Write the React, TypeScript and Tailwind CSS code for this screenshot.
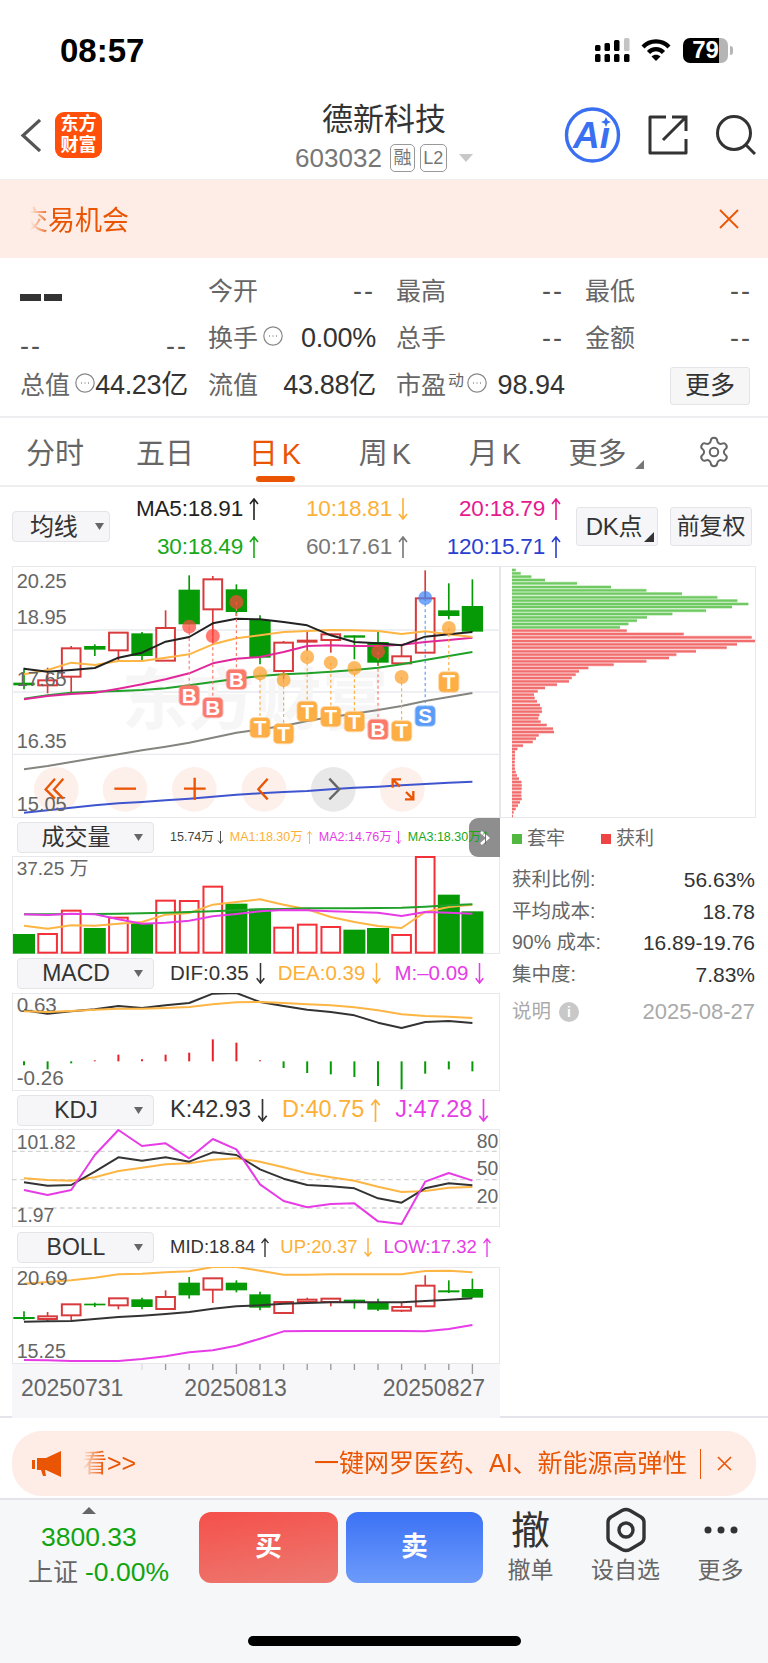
import { Settings } from "lucide-react"

const xs = (i: number) => 72 + 70.8 * i
const pts = (ys: number[]) => ys.map((y, i) => `${xs(i)},${y}`).join(" ")

const RED = "#d93a3c"
const GREEN = "#069a06"

type CandleRow = [number, number, number, number, boolean]

const mainCandles: CandleRow[] = [
  [335, 380, 388, 400, false],
  [335, 373, 388, 412, true],
  [270, 277, 362, 408, true],
  [265, 270, 281, 300, false],
  [230, 230, 283, 315, true],
  [228, 232, 300, 315, false],
  [163, 216, 314, 315, true],
  [58, 101, 205, 205, false],
  [60, 70, 160, 265, true],
  [85, 100, 168, 180, false],
  [178, 192, 305, 325, false],
  [255, 260, 345, 370, true],
  [228, 254, 257, 285, true],
  [232, 235, 252, 290, true],
  [238, 238, 245, 310, false],
  [228, 258, 320, 330, false],
  [265, 301, 322, 325, true],
  [43, 127, 290, 290, true],
  [82, 163, 180, 190, false],
  [70, 150, 227, 228, false],
]

const bollCandles: CandleRow[] = [
  [663, 680, 686, 690, false],
  [665, 678, 686, 695, true],
  [642, 642, 675, 690, true],
  [637, 640, 645, 650, false],
  [624, 624, 645, 657, true],
  [622, 627, 650, 657, false],
  [600, 620, 656, 656, true],
  [560, 577, 615, 625, false],
  [564, 564, 598, 638, true],
  [570, 577, 600, 606, false],
  [604, 612, 652, 660, false],
  [635, 635, 668, 668, true],
  [622, 628, 635, 640, true],
  [625, 625, 635, 648, true],
  [628, 628, 635, 655, false],
  [625, 636, 658, 662, false],
  [636, 650, 661, 665, true],
  [555, 586, 648, 648, true],
  [570, 600, 606, 608, false],
  [565, 596, 622, 622, false],
]

const markers: [number, number, number, string][] = [
  [7, 212, 418, "B"],
  [8, 240, 455, "B"],
  [9, 138, 370, "B"],
  [10, 352, 515, "T"],
  [11, 372, 533, "T"],
  [12, 303, 466, "T"],
  [13, 320, 482, "T"],
  [14, 336, 497, "T"],
  [15, 287, 520, "B"],
  [16, 363, 525, "T"],
  [17, 126, 480, "S"],
  [18, 216, 378, "T"],
]

const tagColor: Record<string, string> = { B: "#fb7a6c", T: "#fdae45", S: "#5a9cf8" }
const dotColor: Record<string, string> = { B: "#ff473c", T: "#fca02a", S: "#3f86f8" }

const volBars: [number, boolean][] = [
  [356, false], [356, true], [286, true], [338, false], [307, true], [323, false], [256, true], [257, true], [214, true], [265, false],
  [280, false], [337, true], [328, true], [335, true], [343, false], [338, false], [359, true], [125, true], [238, false], [288, false],
]

const macdBars: [number, number, boolean][] = [
  [738, 750, false], [738, 762, false], [738, 744, false], [735, 738, true], [718, 738, true], [732, 738, true], [718, 738, true],
  [712, 738, true], [672, 738, true], [682, 738, true], [735, 738, true], [738, 758, false], [738, 773, false], [738, 777, false],
  [738, 785, false], [738, 812, false], [738, 822, false], [738, 775, false], [738, 762, false], [738, 768, false],
]

const chipGreen = [
  [44, 47], [54, 62], [64, 94], [74, 135], [84, 231], [95, 333], [105, 439], [115, 546], [126, 652], [136, 712], [146, 745], [155, 696],
  [166, 618], [176, 517], [186, 441], [196, 411], [206, 385], [216, 360],
]
const chipRed = [
  [226, 380], [236, 551], [246, 755], [257, 765], [267, 711], [277, 680], [288, 588], [298, 529], [308, 507], [318, 439], [328, 341],
  [338, 265], [348, 237], [358, 227], [368, 215], [378, 207], [388, 171], [398, 135], [408, 113], [418, 102], [428, 104], [438, 111],
  [449, 120], [459, 125], [469, 126], [479, 118], [489, 115], [499, 122], [509, 140], [520, 159], [530, 162], [540, 116], [550, 108],
  [560, 98], [571, 69], [581, 52], [590, 45], [600, 45], [610, 45], [620, 44], [630, 44], [640, 45], [650, 47], [660, 51], [670, 57],
  [680, 64], [690, 65], [700, 65], [711, 64], [721, 64], [731, 65], [741, 60], [751, 54], [761, 47], [771, 41], [782, 39],
]

function Arrow({ down, className }: { down?: boolean; className: string }) {
  return (
    <svg viewBox="0 0 10 22" className={className} fill="none" stroke="currentColor" strokeWidth="1.6">
      {down ? <path d="M5 0V21M1 16L5 21L9 16" /> : <path d="M5 22V1M1 6L5 1L9 6" />}
    </svg>
  )
}

function Caret() {
  return (
    <svg viewBox="0 0 9 7" className="h-[7px] w-[9px] shrink-0">
      <path d="M0 0H9L4.5 7Z" fill="#666" />
    </svg>
  )
}

function Candles({ rows }: { rows: CandleRow[] }) {
  return (
    <>
      {rows.map(([hi, top, bot, lo, up], i) => {
        const c = xs(i)
        const color = up ? RED : GREEN
        return (
          <g key={i}>
            <line x1={c} x2={c} y1={hi} y2={lo} stroke={color} strokeWidth="5" />
            {up ? (
              <rect x={c - 28} y={top} width="56" height={bot - top} fill="#fff" stroke={color} strokeWidth="6" />
            ) : (
              <rect x={c - 32} y={top} width="64" height={bot - top} fill={color} />
            )}
          </g>
        )
      })}
    </>
  )
}

function Line({ ys, color, width = 6 }: { ys: number[]; color: string; width?: number }) {
  return <polyline points={pts(ys)} fill="none" stroke={color} strokeWidth={width} strokeLinejoin="round" />
}

function AxisLabel({ x, y, children, size = 60 }: { x: number; y: number; children: string; size?: number }) {
  return (
    <text x={x} y={y} fontSize={size} fill="#666">
      {children}
    </text>
  )
}

function MainChart() {
  return (
    <svg viewBox="36 30 1464 756" className="block h-[252px] w-[488px]">
      <path d="M36 222H1500M36 408H1500M36 595H1500" stroke="#e8eaf0" strokeWidth="4" />
      <text x="365" y="505" fontSize="200" fontWeight="700" fill="#f6f6f6">
        东方财富
      </text>
      {[169, 375, 583, 792, 1207].map((c) => (
        <circle key={c} cx={c} cy="700" r="67" fill="#fdf0ea" />
      ))}
      <circle cx="1000" cy="700" r="67" fill="#e8e8e8" />
      <Candles rows={mainCandles} />
      <Line color="#85857f" ys={[640, 630, 618, 606, 595, 583, 572, 560, 545, 530, 520, 510, 495, 483, 473, 462, 450, 435, 423, 411]} />
      <Line color="#3f55cf" ys={[770, 763, 755, 748, 742, 738, 733, 728, 722, 716, 712, 708, 705, 700, 695, 692, 688, 684, 680, 677]} />
      <Line color="#1fa12a" ys={[428, 418, 410, 407, 405, 402, 397, 388, 378, 368, 360, 355, 352, 347, 342, 335, 325, 312, 300, 288]} />
      <Line color="#e0289a" ys={[430, 420, 414, 410, 398, 385, 370, 352, 322, 308, 303, 288, 270, 268, 270, 270, 266, 258, 252, 245]} />
      <Line color="#fdb544" ys={[355, 342, 320, 327, 315, 315, 305, 295, 265, 247, 238, 228, 225, 222, 223, 225, 234, 226, 235, 243]} />
      <Line color="#222" ys={[338, 347, 342, 336, 305, 290, 257, 243, 202, 188, 190, 198, 208, 238, 258, 262, 268, 242, 235, 228]} />
      {markers.map(([i, cy, tag, letter]) => {
        const c = xs(i)
        const color = tagColor[letter]
        return (
          <g key={i}>
            <line x1={c} x2={c} y1={cy} y2={tag} stroke={color} strokeWidth="3.5" strokeDasharray="9 8" />
            <circle cx={c} cy={cy} r="21" fill={dotColor[letter]} opacity="0.72" />
            <rect x={c - 29} y={tag - 29} width="58" height="58" rx="12" fill={color} stroke={color} strokeOpacity="0.5" strokeWidth="6" />
            <text x={c} y={tag + 22} fontSize="62" fontWeight="700" fill="#fff" textAnchor="middle">
              {letter}
            </text>
          </g>
        )
      })}
      <AxisLabel x={50} y={97}>20.25</AxisLabel>
      <AxisLabel x={50} y={203}>18.95</AxisLabel>
      <AxisLabel x={50} y={390}>17.65</AxisLabel>
      <AxisLabel x={50} y={577}>16.35</AxisLabel>
      <AxisLabel x={50} y={765}>15.05</AxisLabel>
      <g fill="none" stroke="#ea5504" strokeWidth="7">
        <path d="M165 668L137 700L165 728M190 668L162 700L190 728" />
        <path d="M343 698H408" />
        <path d="M552 698H617M584 665V732" />
        <path d="M803 668L775 700L803 730" />
        <path d="M1178 695V670H1203M1178 670L1200 692M1240 705V730H1215M1240 730L1218 708" />
      </g>
      <path d="M988 668L1018 700L988 730" fill="none" stroke="#666" strokeWidth="7" />
    </svg>
  )
}

function VolumeChart() {
  return (
    <svg viewBox="36 122 1464 294" className="block h-[98px] w-[488px]">
      {volBars.map(([top, up], i) =>
        up ? (
          <rect key={i} x={xs(i) - 28} y={top} width="56" height={412 - top} fill="#fff" stroke="#f43038" strokeWidth="6" />
        ) : (
          <rect key={i} x={xs(i) - 33} y={top} width="66" height={415 - top} fill="#069a06" />
        ),
      )}
      <Line color="#fdb544" ys={[331, 340, 330, 331, 325, 320, 298, 293, 268, 260, 252, 268, 282, 305, 320, 332, 338, 290, 275, 268]} />
      <Line color="#1fa12a" ys={[297, 297, 296, 296, 295, 294, 292, 290, 288, 285, 282, 281, 279, 279, 279, 278, 277, 274, 270, 267]} />
      <Line color="#e63ce6" ys={[297, 299, 295, 297, 312, 325, 322, 316, 303, 296, 288, 284, 285, 288, 290, 292, 302, 290, 292, 295]} />
      <AxisLabel x={50} y={180} size={57}>37.25 万</AxisLabel>
    </svg>
  )
}

function MacdChart() {
  return (
    <svg viewBox="36 533 1464 294" className="block h-[98px] w-[488px]">
      {macdBars.map(([a, b, up], i) => (
        <line key={i} x1={xs(i)} x2={xs(i)} y1={a} y2={b} stroke={up ? "#e8202a" : "#069a06"} strokeWidth="6" />
      ))}
      <AxisLabel x={50} y={590} size={62}>0.63</AxisLabel>
      <AxisLabel x={50} y={808} size={62}>-0.26</AxisLabel>
      <Line color="#333" ys={[585, 595, 588, 582, 572, 578, 570, 563, 535, 533, 560, 572, 583, 590, 600, 622, 638, 620, 617, 623]} />
      <Line color="#fdb544" ys={[588, 590, 587, 583, 580, 580, 578, 575, 567, 561, 560, 563, 567, 570, 576, 585, 597, 602, 604, 608]} />
    </svg>
  )
}

function KdjChart() {
  return (
    <svg viewBox="36 117 1464 294" className="block h-[98px] w-[488px]">
      <path d="M36 184H1500M36 269H1500M36 354H1500" stroke="#d4d4d4" strokeWidth="4" strokeDasharray="14 10" />
      <AxisLabel x={50} y={176} size={58}>101.82</AxisLabel>
      <AxisLabel x={50} y={395} size={58}>1.97</AxisLabel>
      <text x="1495" y="175" fontSize="58" fill="#666" textAnchor="end">80</text>
      <text x="1495" y="255" fontSize="58" fill="#666" textAnchor="end">50</text>
      <text x="1495" y="340" fontSize="58" fill="#666" textAnchor="end">20</text>
      <Line color="#fdb544" ys={[265, 270, 272, 262, 243, 233, 223, 220, 209, 205, 215, 232, 250, 262, 272, 290, 306, 303, 293, 291]} />
      <Line color="#333" ys={[277, 287, 285, 245, 202, 212, 202, 215, 187, 195, 238, 266, 285, 289, 295, 325, 338, 295, 280, 286]} />
      <Line color="#e63ce6" ys={[300, 315, 300, 195, 120, 168, 160, 205, 147, 178, 283, 333, 352, 342, 340, 394, 402, 275, 249, 272]} />
    </svg>
  )
}

function BollChart() {
  return (
    <svg viewBox="36 530 1464 291" className="block h-[97px] w-[488px]">
      <Candles rows={bollCandles} />
      <Line color="#fdb544" ys={[580, 575, 570, 562, 552, 550, 546, 543, 530, 530, 541, 553, 553, 552, 552, 552, 552, 542, 541, 546]} />
      <Line color="#333" ys={[694, 693, 692, 686, 680, 676, 671, 665, 655, 648, 645, 640, 638, 636, 636, 636, 636, 632, 628, 624]} />
      <Line color="#e63ce6" ys={[809, 810, 812, 812, 812, 806, 798, 786, 780, 766, 745, 723, 722, 722, 722, 722, 722, 723, 716, 704]} />
      <AxisLabel x={50} y={584} size={61}>20.69</AxisLabel>
      <AxisLabel x={50} y={804} size={59}>15.25</AxisLabel>
    </svg>
  )
}

function Select({ label }: { label: string }) {
  return (
    <div className="ml-[5px] flex h-[31px] w-[137px] shrink-0 items-center rounded-[4px] border border-[#e4e4e8] bg-[#f6f6f8]">
      <span className="w-[116px] text-center text-[23px] text-[#333]">{label}</span>
      <Caret />
    </div>
  )
}

function Dots() {
  return (
    <svg viewBox="0 0 20 20" className="h-5 w-5 shrink-0 self-start" fill="none">
      <circle cx="10" cy="10" r="9.2" stroke="#888" strokeWidth="1.2" />
      <path d="M6 10H6.8M9.6 10H10.4M13.2 10H14" stroke="#777" strokeWidth="1.4" />
    </svg>
  )
}

function Cell({ label, value, dots }: { label: string; value: string; dots?: boolean }) {
  return (
    <div className="flex items-center justify-between whitespace-nowrap">
      <div className="flex shrink-0 items-start gap-[5px]">
        <span className="text-[#666]">{label}</span>
        {dots && <Dots />}
      </div>
      <span className={value === "--" ? "pr-[1px] text-[27px] tracking-[2px] text-[#555]" : "shrink-0 text-[27px] tracking-[-0.3px] text-[#333]"}>{value}</span>
    </div>
  )
}

function StatusIcons() {
  return (
    <div className="flex items-center pr-[35px]">
      <svg viewBox="0 0 36 25" className="h-[25px] w-9" fill="#000">
        <rect x="0" y="7" width="5.5" height="6" rx="1.5" />
        <rect x="9.5" y="5" width="5.5" height="8" rx="1.5" />
        <rect x="19" y="2" width="5.5" height="11" rx="1.5" />
        <rect x="29" y="0" width="5.5" height="13" rx="1.5" fill="#c4c4c4" />
        <rect x="0" y="16" width="5.5" height="8" rx="1.5" />
        <rect x="9.5" y="16" width="5.5" height="8" rx="1.5" />
        <rect x="19" y="16" width="5.5" height="8" rx="1.5" />
        <rect x="29" y="16" width="5.5" height="8" rx="1.5" />
      </svg>
      <svg viewBox="0 0 30 24" className="ml-[10px] h-6 w-[30px]" fill="none" stroke="#000" strokeWidth="4.2">
        <path d="M2 9C9 1.5 21 1.5 28 9" />
        <path d="M7.5 14.5C11.5 10 18.5 10 22.5 14.5" />
        <path d="M15 23L10.5 18.5C13 16.2 17 16.2 19.5 18.5Z" fill="#000" stroke="none" />
      </svg>
      <div className="ml-[12px] flex h-[25px] w-[45px] items-center justify-center rounded-[7px] bg-[linear-gradient(90deg,#000_80%,#b5b5b5_80%)] text-[24px] font-bold leading-none text-white">
        79
      </div>
      <div className="ml-[2px] h-[9px] w-[3px] rounded-r-full bg-[#b5b5b5]" />
    </div>
  )
}

function Header() {
  return (
    <div className="grid h-[80px] grid-cols-[1fr_auto_1fr] border-b border-[#eeeeee]">
      <div className="flex items-center pb-[9px] pl-5">
        <svg viewBox="0 0 21 33" className="h-[33px] w-[21px]" fill="none" stroke="#555" strokeWidth="3.2">
          <path d="M20 1L3 16.5L20 32" />
        </svg>
        <div className="ml-[14px] flex h-[46px] w-[47px] flex-col items-center justify-center rounded-[9px] bg-[#ff4f0a] text-[18px] font-bold leading-[21px] text-white">
          <span>东方</span>
          <span>财富</span>
        </div>
      </div>
      <div className="flex flex-col items-center">
        <span className="mt-[2px] text-[31px] leading-[36px] text-[#333]">德新科技</span>
        <div className="mt-[6px] flex items-center">
          <span className="text-[26px] leading-[28px] text-[#777]">603032</span>
          <span className="ml-2 flex h-7 w-[25px] items-center justify-center rounded-[5px] border border-[#999] text-[18px] text-[#777]">融</span>
          <span className="ml-[5px] flex h-7 w-[27px] items-center justify-center rounded-[5px] border border-[#999] text-[18px] text-[#777]">L2</span>
          <svg viewBox="0 0 14 8" className="ml-3 h-2 w-[14px]">
            <path d="M0 0H14L7 8Z" fill="#c8c8c8" />
          </svg>
        </div>
      </div>
      <div className="flex items-center justify-end pb-[9px] pr-3">
        <svg viewBox="0 0 57 56" className="h-14 w-[57px]">
          <circle cx="28.5" cy="28" r="26" fill="#fff" stroke="#3a6ff2" strokeWidth="3.4" />
          <text x="9" y="41" fontSize="37" fontWeight="700" fontStyle="italic" fill="#3a6ff2">
            Aı
          </text>
          <path d="M42 10L43.5 13.5L47 15L43.5 16.5L42 20L40.5 16.5L37 15L40.5 13.5Z" fill="#3a6ff2" />
        </svg>
        <svg viewBox="0 0 40 40" className="ml-[27px] h-10 w-10" fill="none" stroke="#333" strokeWidth="3">
          <path d="M18 2H2V38H38V24" strokeLinejoin="round" />
          <path d="M15 25L37 3M24 2H38V16" />
        </svg>
        <svg viewBox="0 0 40 40" className="ml-[28px] h-10 w-10" fill="none" stroke="#333" strokeWidth="3">
          <circle cx="18" cy="18" r="16.5" />
          <path d="M30 30L39 39" />
        </svg>
      </div>
    </div>
  )
}

function Stats() {
  return (
    <div className="h-[160px] border-b-2 border-[#eeeef0] pl-5 pt-[10px] text-[25px] leading-none">
      <div className="grid grid-cols-[168px_168px_169px_168px] gap-x-5 auto-rows-[47px]">
        <div className="flex items-center gap-[3px] pt-3">
          <div className="h-[7px] w-[21px] bg-[#333]" />
          <div className="h-[7px] w-[18px] bg-[#333]" />
        </div>
        <Cell label="今开" value="--" />
        <Cell label="最高" value="--" />
        <Cell label="最低" value="--" />
        <div className="flex items-center justify-between pt-4 text-[27px] tracking-[2px] text-[#555]">
          <span>--</span>
          <span>--</span>
        </div>
        <Cell label="换手" value="0.00%" dots />
        <Cell label="总手" value="--" />
        <Cell label="金额" value="--" />
        <Cell label="总值" value="44.23亿" dots />
        <Cell label="流值" value="43.88亿" />
        <div className="flex items-center justify-between whitespace-nowrap">
          <div className="flex items-start">
            <span className="text-[#666]">市盈</span>
            <span className="ml-[2px] text-[16px] text-[#666]">动</span>
            <span className="ml-[3px]">
              <Dots />
            </span>
          </div>
          <span className="text-[27px] text-[#333]">98.94</span>
        </div>
        <div className="flex items-center justify-end">
          <div className="mr-[3px] flex h-[38px] w-20 items-center justify-center rounded-[3px] border border-[#e4e4e8] bg-[#f6f6f7] text-[25px] text-[#333]">
            更多
          </div>
        </div>
      </div>
    </div>
  )
}

function Tabs() {
  const tab = "flex flex-col items-center pt-[16px] text-[29px] leading-[40px] text-[#666]"
  return (
    <div className="grid h-[69px] grid-cols-[110px_110px_110px_110px_110px_110px_108px] border-b-2 border-[#eeeef1]">
      <div className={tab}>分时</div>
      <div className={tab}>五日</div>
      <div className="flex flex-col items-center pt-[16px] text-[29px] leading-[40px] text-[#ea5504]">
        <span>
          日<span className="ml-1">K</span>
        </span>
        <div className="mt-[2px] h-[6px] w-[39px] rounded-full bg-[#ea5504]" />
      </div>
      <div className={tab}>
        <span>
          周<span className="ml-1">K</span>
        </span>
      </div>
      <div className={tab}>
        <span>
          月<span className="ml-1">K</span>
        </span>
      </div>
      <div className="flex items-start justify-center pt-[16px] text-[29px] leading-[40px] text-[#666]">
        <span className="ml-[2px]">更多</span>
        <svg viewBox="0 0 9 9" className="ml-[8px] mt-[26px] h-[9px] w-[9px]">
          <path d="M9 0V9H0Z" fill="#777" />
        </svg>
      </div>
      <div className="flex items-start justify-center pt-[17px]">
        <Settings size={34} strokeWidth={1.4} color="#666" />
      </div>
    </div>
  )
}

function MaRow() {
  const cell = "flex items-center justify-end gap-[5px]"
  return (
    <div className="flex h-[79px] items-center pl-3 text-[22.5px] tracking-[-0.2px]">
      <div className="flex h-[31px] w-[98px] shrink-0 items-center rounded-[4px] border border-[#e4e4e8] bg-[#f6f6f8] pl-[17px]">
        <span className="text-[24px] text-[#333]">均线</span>
        <span className="ml-[17px]">
          <Caret />
        </span>
      </div>
      <div className="mt-[3px] grid grid-cols-[150px_149px_153px] auto-rows-[38px]">
        <div className={`${cell} text-[#222]`}>MA5:18.91<Arrow className="h-[22px] w-[12px]" /></div>
        <div className={`${cell} text-[#fdb037]`}>10:18.81<Arrow down className="h-[22px] w-[12px]" /></div>
        <div className={`${cell} text-[#e6198f]`}>20:18.79<Arrow className="h-[22px] w-[12px]" /></div>
        <div className={`${cell} text-[#18a818]`}>30:18.49<Arrow className="h-[22px] w-[12px]" /></div>
        <div className={`${cell} text-[#777]`}>60:17.61<Arrow className="h-[22px] w-[12px]" /></div>
        <div className={`${cell} text-[#2a3fd0]`}>120:15.71<Arrow className="h-[22px] w-[12px]" /></div>
      </div>
      <div className="relative ml-[14px] flex h-[39px] w-[82px] items-center justify-center rounded-[3px] border border-[#e4e4e8] bg-[#f6f6f8] pr-[6px] text-[24px] text-[#333]">
        DK点
        <svg viewBox="0 0 10 10" className="absolute bottom-[3px] right-[3px] h-[10px] w-[10px]">
          <path d="M10 0V10H0Z" fill="#333" />
        </svg>
      </div>
      <div className="ml-3 flex h-[39px] w-[82px] items-center justify-center rounded-[3px] border border-[#e4e4e8] bg-[#f6f6f8] text-[23px] text-[#333]">
        前复权
      </div>
    </div>
  )
}

function Left() {
  const frame = "w-[488px] ring-1 ring-inset ring-[#e8e8ec]"
  return (
    <div className="w-[500px] shrink-0 pl-3">
      <div className={frame}>
        <MainChart />
      </div>
      <div className="relative flex h-[38px] items-center text-[12.5px] leading-none">
        <div className="absolute right-0 top-0 flex h-[39px] w-[31px] items-center justify-center rounded-l-[9px] bg-[#8e8e8e]">
          <svg viewBox="0 0 10 14" className="h-[14px] w-[10px]" fill="none" stroke="#fff" strokeWidth="2.6">
            <path d="M1 1L8 7L1 13" />
          </svg>
        </div>
        <Select label="成交量" />
        <div className="relative z-10 ml-4 flex items-center whitespace-nowrap">
          <div className="flex items-center text-[#444]">
            15.74万<Arrow down className="ml-[3px] h-[13px] w-[7px]" />
          </div>
          <div className="ml-[6px] flex items-center text-[#fdb037]">
            MA1:18.30万<Arrow className="ml-[3px] h-[13px] w-[7px]" />
          </div>
          <div className="ml-[6px] flex items-center text-[#e63ce6]">
            MA2:14.76万<Arrow down className="ml-[3px] h-[13px] w-[7px]" />
          </div>
          <div className="ml-[6px] flex items-center text-[#18a818]">
            MA3:18.30万<Arrow className="ml-[1px] h-[13px] w-[7px]" />
          </div>
        </div>
      </div>
      <div className={frame}>
        <VolumeChart />
      </div>
      <div className="flex h-[39px] items-center text-[20.5px] leading-none">
        <Select label="MACD" />
        <div className="ml-4 flex items-center text-[#333]">
          DIF:0.35<Arrow down className="ml-[6px] h-[21px] w-[11px]" />
        </div>
        <div className="ml-[12px] flex items-center text-[#fdb037]">
          DEA:0.39<Arrow down className="ml-[6px] h-[21px] w-[11px]" />
        </div>
        <div className="ml-[12px] flex items-center text-[#e63ce6]">
          M:–0.09<Arrow down className="ml-[6px] h-[21px] w-[11px]" />
        </div>
      </div>
      <div className={frame}>
        <MacdChart />
      </div>
      <div className="flex h-[38px] items-center text-[23.5px] leading-none">
        <Select label="KDJ" />
        <div className="ml-4 flex items-center text-[#333]">
          K:42.93<Arrow down className="ml-[6px] h-[23px] w-[11px]" />
        </div>
        <div className="ml-[14px] flex items-center text-[#fdb037]">
          D:40.75<Arrow className="ml-[6px] h-[23px] w-[11px]" />
        </div>
        <div className="ml-[14px] flex items-center text-[#e63ce6]">
          J:47.28<Arrow down className="ml-[6px] h-[23px] w-[11px]" />
        </div>
      </div>
      <div className={frame}>
        <KdjChart />
      </div>
      <div className="flex h-[40px] items-center text-[18.5px] leading-none">
        <Select label="BOLL" />
        <div className="ml-4 flex items-center text-[#333]">
          MID:18.84<Arrow className="ml-[5px] h-[19px] w-[10px]" />
        </div>
        <div className="ml-[10px] flex items-center text-[#fdb037]">
          UP:20.37<Arrow down className="ml-[5px] h-[19px] w-[10px]" />
        </div>
        <div className="ml-[11px] flex items-center text-[#e63ce6]">
          LOW:17.32<Arrow className="ml-[5px] h-[19px] w-[10px]" />
        </div>
      </div>
      <div className={frame}>
        <BollChart />
      </div>
      <div className="h-[54px] w-[488px] bg-[#f7f7f9]">
        <svg viewBox="36 820 1464 30" className="block h-[10px] w-[488px]">
          {Array.from({ length: 15 }, (_, k) => k + 5).map((i) => (
            <line key={i} x1={xs(i)} x2={xs(i)} y1="820" y2={i === 9 || i === 19 ? 850 : 838} stroke={i === 5 ? "#ddd" : "#999"} strokeWidth="4" />
          ))}
        </svg>
        <div className="flex pt-[1px] text-[23px] leading-[26px] text-[#666]">
          <span className="ml-[9px]">20250731</span>
          <span className="ml-[61px]">20250813</span>
          <span className="ml-[96px]">20250827</span>
        </div>
      </div>
    </div>
  )
}

function Right() {
  const row = "flex h-[31.5px] items-center justify-between"
  return (
    <div className="w-[256px] shrink-0">
      <div className="h-[252px] w-[256px] ring-1 ring-inset ring-[#e8e8ec]">
        <svg viewBox="0 32 768 756" className="block h-[252px] w-[256px]">
          {chipGreen.map(([y, w]) => (
            <g key={y} fill="#6fca62">
              <rect x="36" y={y - 5} width={w - 36} height="10" opacity="0.45" />
              <rect x="36" y={y - 3} width={w - 36} height="6" />
            </g>
          ))}
          {chipRed.map(([y, w]) => (
            <g key={y} fill="#f26d6d">
              <rect x="36" y={y - 5} width={w - 36} height="10" opacity="0.45" />
              <rect x="36" y={y - 3} width={w - 36} height="6" />
            </g>
          ))}
        </svg>
      </div>
      <div className="pl-3 pr-[1px] text-[19.5px] leading-none">
        <div className="flex h-[41px] items-center text-[19px] text-[#666]">
          <div className="h-[10px] w-[10px] bg-[#52b83f]" />
          <span className="ml-[5px]">套牢</span>
          <div className="ml-[36px] h-[10px] w-[10px] bg-[#ef4444]" />
          <span className="ml-[5px]">获利</span>
        </div>
        <div className="mt-[5px]">
          <div className={row}>
            <span className="text-[#666]">获利比例:</span>
            <span className="text-[21px] text-[#333]">56.63%</span>
          </div>
          <div className={row}>
            <span className="text-[#666]">平均成本:</span>
            <span className="text-[21px] text-[#333]">18.78</span>
          </div>
          <div className={row}>
            <span className="text-[#666]">90% 成本:</span>
            <span className="text-[21px] text-[#333]">16.89-19.76</span>
          </div>
          <div className={row}>
            <span className="text-[#666]">集中度:</span>
            <span className="text-[21px] text-[#333]">7.83%</span>
          </div>
        </div>
        <div className="mt-[6px] flex h-8 items-center justify-between text-[#aaa]">
          <div className="flex items-center gap-2">
            <span>说明</span>
            <div className="flex h-5 w-5 items-center justify-center rounded-full bg-[#c8c8c8] text-[14px] font-bold text-white">i</div>
          </div>
          <span className="text-[22px]">2025-08-27</span>
        </div>
      </div>
    </div>
  )
}

function Notice() {
  return (
    <div className="px-3 pb-[2px] pt-[13px]">
      <div className="flex h-[65px] items-center rounded-[30px] bg-[#fdede6] pl-5 text-[25px] text-[#ea5504]">
        <svg viewBox="0 0 30 26" className="h-[26px] w-[30px] shrink-0" fill="#ea5504">
          <rect x="0" y="9" width="3" height="9" />
          <path d="M5 7H14L29 0V26L14 19H13L14 25L11 25L9 19H5Z" />
        </svg>
        <span className="ml-5 w-[55px] whitespace-nowrap [mask-image:linear-gradient(to_right,transparent,black_22px)]">看&gt;&gt;</span>
        <span className="ml-[177px] w-[377px] overflow-hidden whitespace-nowrap [mask-image:linear-gradient(to_left,transparent,black_8px)]">
          一键网罗医药、AI、新能源高弹性
        </span>
        <div className="ml-[9px] h-[30px] w-px bg-[#ea5504]" />
        <svg viewBox="0 0 15 15" className="ml-4 h-[15px] w-[15px]" fill="none" stroke="#ea5504" strokeWidth="1.6">
          <path d="M1 1L14 14M14 1L1 14" />
        </svg>
      </div>
    </div>
  )
}

function BottomBar() {
  const label = "mt-[3px] text-[23px] leading-[28px] text-[#666]"
  return (
    <div className="flex h-[165px] flex-col border-t-2 border-[#e4e4ea] bg-[#f6f7f9]">
      <div className="flex">
        <div className="w-[199px] shrink-0">
          <svg viewBox="0 0 14 7" className="ml-[82px] mt-[7px] h-[7px] w-[14px]">
            <path d="M7 0L14 7H0Z" fill="#666" />
          </svg>
          <div className="ml-[41px] mt-[8px] text-[26.5px] leading-[30px] text-[#10a510]">3800.33</div>
          <div className="ml-[28px] mt-[5px] flex items-center text-[26.5px] leading-[30px] text-[#10a510]">
            <span className="text-[25px] text-[#666]">上证</span>
            <span className="ml-[7px]">-0.00%</span>
          </div>
        </div>
        <div className="mt-3 flex h-[71px] w-[139px] items-center justify-center rounded-[12px] bg-[linear-gradient(170deg,#f5504a,#ec7a72)] text-[27px] font-semibold text-white">买</div>
        <div className="ml-2 mt-3 flex h-[71px] w-[137px] items-center justify-center rounded-[12px] bg-[linear-gradient(180deg,#3c72f5,#6d9bfb)] text-[27px] font-semibold text-white">卖</div>
        <div className="grid flex-1 grid-cols-3 pt-[7px]">
          <div className="flex flex-col items-center">
            <div className="flex h-[46px] items-center text-[39px] leading-none text-[#333]">撤</div>
            <span className={label}>撤单</span>
          </div>
          <div className="flex flex-col items-center">
            <svg viewBox="0 0 42 46" className="h-[46px] w-[42px]" fill="none" stroke="#333" strokeWidth="3.4" strokeLinejoin="round">
              <path d="M17 3.5Q21 1.5 25 3.5L36 10Q39 12 39 15V31Q39 34 36 36L25 42.5Q21 44.5 17 42.5L6 36Q3 34 3 31V15Q3 12 6 10Z" />
              <circle cx="21" cy="23" r="7" />
            </svg>
            <span className={label}>设自选</span>
          </div>
          <div className="flex flex-col items-center">
            <svg viewBox="0 0 34 46" className="h-[46px] w-[34px]" fill="#333">
              <circle cx="4" cy="23" r="3.5" />
              <circle cx="17" cy="23" r="3.5" />
              <circle cx="30" cy="23" r="3.5" />
            </svg>
            <span className={label}>更多</span>
          </div>
        </div>
      </div>
      <div className="mb-[17px] ml-[248px] mt-auto h-[10px] w-[273px] rounded-full bg-black" />
    </div>
  )
}

export default function App() {
  return (
    <div className="flex h-[1663px] w-[768px] flex-col overflow-hidden bg-white [font-family:'Liberation_Sans','Noto_Sans_CJK_SC',sans-serif]">
      <div className="flex h-[100px] items-center justify-between pl-[60px]">
        <span className="text-[33px] font-semibold leading-none text-black">08:57</span>
        <StatusIcons />
      </div>
      <Header />
      <div className="flex h-[78px] items-center justify-between bg-[#fdede6] pl-[21px] pr-[29px]">
        <span className="pt-[4px] text-[27px] text-[#ea5504] [mask-image:linear-gradient(to_right,transparent_9px,black_30px)]">交易机会</span>
        <svg viewBox="0 0 20 20" className="h-5 w-5" fill="none" stroke="#ea5504" strokeWidth="1.8">
          <path d="M1 1L19 19M19 1L1 19" />
        </svg>
      </div>
      <Stats />
      <Tabs />
      <MaRow />
      <div className="flex h-[852px] shrink-0 border-b-2 border-[#e4e4ea]">
        <Left />
        <Right />
      </div>
      <Notice />
      <BottomBar />
    </div>
  )
}
